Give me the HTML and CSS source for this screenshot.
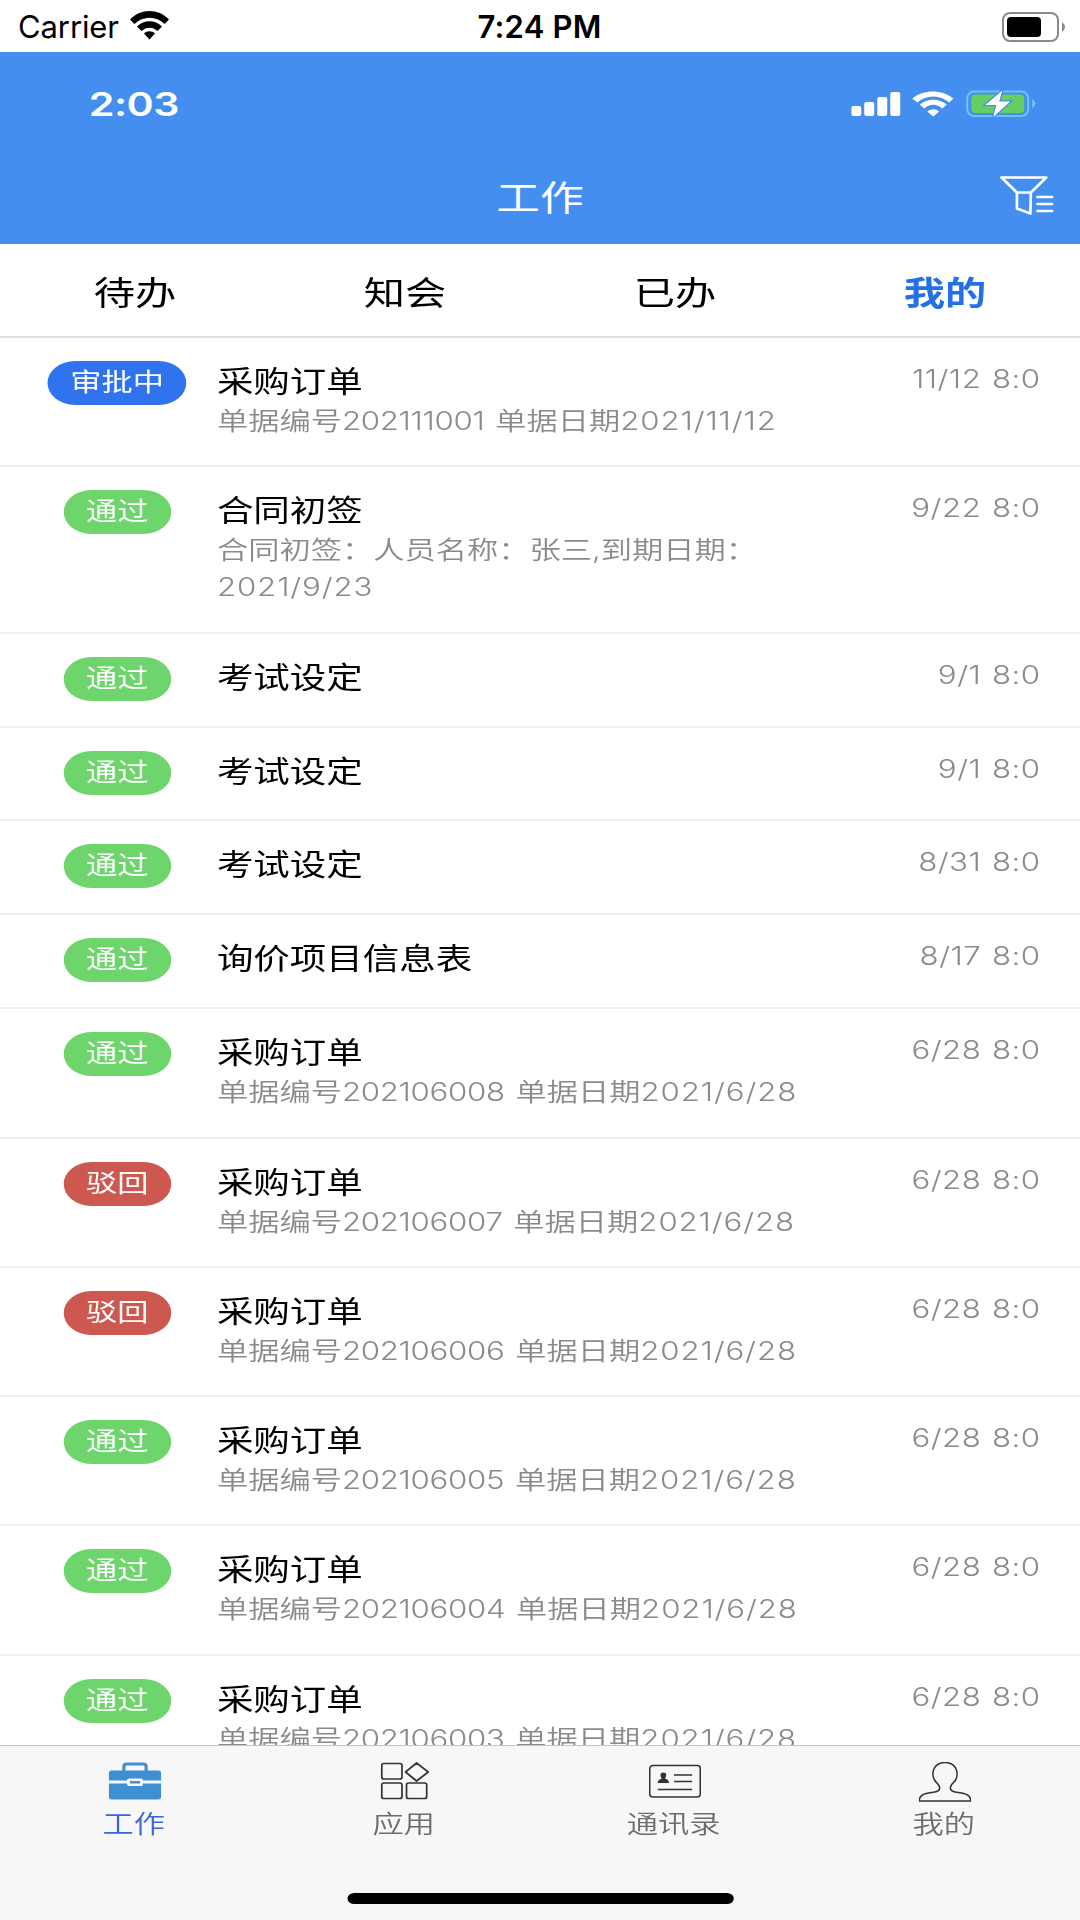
FILE: index.html
```html
<!DOCTYPE html>
<html lang="zh-CN">
<head>
    <meta charset="utf-8">
    <title>工作</title>
    <link rel="stylesheet" href="styles.css">
</head>
<body>
    <div class="statusbar">
        <div class="carrier">
            <span>Carrier</span>
            <svg width="39" height="29" viewBox="0 0 39 29">
                <path d="M0 8.500C11-2.800 28-2.800 39 8.500L34.500 13C26 4.500 13 4.500 4.500 13ZM7 15.500C14 8.500 25 8.500 32 15.500L27.500 20C23 15.500 16 15.500 11.500 20ZM14 22.500C17 19.500 22 19.500 25 22.500L19.500 28.500Z"/>
            </svg>
        </div>
        <div class="clock">7:24 PM</div>
        <svg class="battery" width="64" height="30" viewBox="0 0 64 30">
            <rect x="1" y="1" width="55" height="28" rx="7" fill="none" stroke="#8a8a8a" stroke-width="2"/>
            <rect x="5" y="5" width="34" height="20" rx="4"/>
            <path d="M60 10Q66 15 60 20Z" fill="#8a8a8a"/>
        </svg>
    </div>

    <div class="app">
        <div class="header">
            <div class="phone">
                <span class="time">2:03</span>
                <svg width="148" height="28" viewBox="0 0 185 28" preserveAspectRatio="none">
                    <g fill="#fff">
                        <rect x="0" y="16" width="10" height="10" rx="2"/>
                        <rect x="13" y="12" width="10" height="14" rx="2"/>
                        <rect x="26" y="7" width="10" height="19" rx="2"/>
                        <rect x="39" y="2" width="10" height="24" rx="2"/>
                        <path d="M61 8.500C72-1 91-1 102 8.500L98 12.500C89 4.500 75 4.500 66 12.500ZM68.500 14.500C76 8 88 8 95.500 14.500L91 18.500C85 13.500 79 13.500 73 18.500ZM76 21.500C80 18.500 84 18.500 88 21.500L82 26.500Z"/>
                    </g>
                    <rect x="116" y="1.500" width="61" height="24.500" rx="7" fill="none" stroke="#79bdf8" stroke-width="2"/>
                    <rect x="120" y="4.500" width="53" height="18.500" rx="4" fill="#67ce62"/>
                    <path d="M181 9Q187 13.500 181 18Z" fill="#79c8f8"/>
                    <path d="M151 0.500L134 15H145L142 27L159 11.500H148Z" fill="#fff" stroke="#438eee" stroke-width="2.500" paint-order="stroke"/>
                </svg>
            </div>
            <div class="navbar">
                <h1>工作</h1>
                <svg class="filter" width="43" height="39" viewBox="0 0 54 39" preserveAspectRatio="none">
                    <path d="M1.500 1.500H46.500L31 16.500H17ZM17 16.500V32.500L30.500 37.500L31 16.500M36.500 21H53.500M36.500 28H53.500M36.500 35H53.500" fill="none" stroke="#fff" stroke-width="2.700" stroke-linejoin="round"/>
                </svg>
            </div>
        </div>

        <div class="tabs">
            <div class="tab">待办</div>
            <div class="tab">知会</div>
            <div class="tab">已办</div>
            <div class="tab active">我的</div>
        </div>

        <div class="list">
            <div class="item">
                <div class="state"><span class="tag doing">审批中</span></div>
                <div class="info"><h2>采购订单</h2><p>单据编号<span class="no">202111001</span> 单据日期<span class="day">2021/11/12</span></p></div>
                <div class="date">11/12 8:0</div>
            </div>
            <div class="item">
                <div class="state"><span class="tag pass">通过</span></div>
                <div class="info"><h2>合同初签</h2><p>合同初签：人员名称：张三,到期日期：<br><span class="day">2021/9/23</span></p></div>
                <div class="date">9/22 8:0</div>
            </div>
            <div class="item">
                <div class="state"><span class="tag pass">通过</span></div>
                <div class="info"><h2>考试设定</h2></div>
                <div class="date">9/1 8:0</div>
            </div>
            <div class="item">
                <div class="state"><span class="tag pass">通过</span></div>
                <div class="info"><h2>考试设定</h2></div>
                <div class="date">9/1 8:0</div>
            </div>
            <div class="item">
                <div class="state"><span class="tag pass">通过</span></div>
                <div class="info"><h2>考试设定</h2></div>
                <div class="date">8/31 8:0</div>
            </div>
            <div class="item">
                <div class="state"><span class="tag pass">通过</span></div>
                <div class="info"><h2>询价项目信息表</h2></div>
                <div class="date">8/17 8:0</div>
            </div>
            <div class="item">
                <div class="state"><span class="tag pass">通过</span></div>
                <div class="info"><h2>采购订单</h2><p>单据编号<span class="no">202106008</span> 单据日期<span class="day">2021/6/28</span></p></div>
                <div class="date">6/28 8:0</div>
            </div>
            <div class="item">
                <div class="state"><span class="tag reject">驳回</span></div>
                <div class="info"><h2>采购订单</h2><p>单据编号<span class="no">202106007</span> 单据日期<span class="day">2021/6/28</span></p></div>
                <div class="date">6/28 8:0</div>
            </div>
            <div class="item">
                <div class="state"><span class="tag reject">驳回</span></div>
                <div class="info"><h2>采购订单</h2><p>单据编号<span class="no">202106006</span> 单据日期<span class="day">2021/6/28</span></p></div>
                <div class="date">6/28 8:0</div>
            </div>
            <div class="item">
                <div class="state"><span class="tag pass">通过</span></div>
                <div class="info"><h2>采购订单</h2><p>单据编号<span class="no">202106005</span> 单据日期<span class="day">2021/6/28</span></p></div>
                <div class="date">6/28 8:0</div>
            </div>
            <div class="item">
                <div class="state"><span class="tag pass">通过</span></div>
                <div class="info"><h2>采购订单</h2><p>单据编号<span class="no">202106004</span> 单据日期<span class="day">2021/6/28</span></p></div>
                <div class="date">6/28 8:0</div>
            </div>
            <div class="item">
                <div class="state"><span class="tag pass">通过</span></div>
                <div class="info"><h2>采购订单</h2><p>单据编号<span class="no">202106003</span> 单据日期<span class="day">2021/6/28</span></p></div>
                <div class="date">6/28 8:0</div>
            </div>
        </div>

        <div class="menu">
            <div class="menu-item active">
                <svg width="42" height="40" viewBox="0 0 52 40" preserveAspectRatio="none">
                    <path d="M15 9V4.500Q15 2 18 2H34Q37 2 37 4.500V9" fill="none" stroke="#3f8fd3" stroke-width="3.200"/>
                    <path d="M3 8.500H49Q52 8.500 52 11.500V18.500H34Q34 16.500 32 16.500H20Q18 16.500 18 18.500H0V11.500Q0 8.500 3 8.500ZM0 21.500H18Q18 24 20 24H32Q34 24 34 21.500H52V34.500Q52 37.500 49 37.500H3Q0 37.500 0 34.500Z" fill="#3f8fd3"/>
                    <rect x="21" y="19" width="10" height="2.500" fill="#3f8fd3"/>
                </svg>
                <span>工作</span>
            </div>
            <div class="menu-item">
                <svg width="42" height="40" viewBox="0 0 52 40" preserveAspectRatio="none">
                    <g fill="none" stroke="#333" stroke-width="1.700" stroke-linejoin="round">
                        <rect x="3" y="1.500" width="20" height="15.500" rx="2"/>
                        <rect x="3" y="21" width="20" height="15.500" rx="2"/>
                        <rect x="27.500" y="21" width="20" height="15.500" rx="2"/>
                        <path d="M37.500 1L49 10L37.500 19L26.500 10Z"/>
                    </g>
                </svg>
                <span>应用</span>
            </div>
            <div class="menu-item">
                <svg width="42" height="40" viewBox="0 0 52 40" preserveAspectRatio="none">
                    <rect x="1" y="3.500" width="50" height="31.500" rx="3" fill="none" stroke="#333" stroke-width="1.500"/>
                    <path d="M25 13H43M25 19.500H43M9 27.500H43" stroke="#333" stroke-width="1.700"/>
                    <path d="M14.500 10.500C18 10.500 18 14 16 16.500C18 17.500 20 18 20 21H9C9 18 11 17.500 13 16.500C11 14 11 10.500 14.500 10.500Z" fill="#333"/>
                </svg>
                <span>通讯录</span>
            </div>
            <div class="menu-item">
                <svg width="42" height="40" viewBox="0 0 52 40" preserveAspectRatio="none">
                    <path d="M26 0.500C33 0.500 38 5 38 12C38 17 36 19 33 22C30 26 31 29 36 30C44 31.500 51.500 31.500 51.500 39H0.500C0.500 31.500 8 31.500 16 30C21 29 22 26 19 22C16 19 14 17 14 12C14 5 19 0.500 26 0.500Z" fill="none" stroke="#333" stroke-width="1.500"/>
                </svg>
                <span>我的</span>
            </div>
        </div>
        <div class="home"></div>
    </div>
</body>
</html>
```
FILE: styles.css
```css
* {
    box-sizing: border-box;
}
body {
    margin: 0;
    width: 1080px;
    height: 1920px;
    overflow: hidden;
    background-color: #fff;
    color: #000;
    font-family: Inter, "Noto Sans CJK SC", sans-serif;
}
h1, h2, p {
    margin: 0;
    font-weight: 400;
}
svg {
    display: block;
}
.statusbar {
    display: grid;
    grid-template-columns: 1fr auto 1fr;
    align-items: center;
    height: 52px;
    padding: 1px 14px 0 18px;
    font-size: 31px;
}
.carrier {
    display: flex;
    align-items: center;
    gap: 11px;
    letter-spacing: -0.1px;
}
.carrier svg {
    margin-top: -3px;
}
.clock {
    margin-right: 5px;
    font-weight: 600;
    letter-spacing: 0.2px;
}
.battery {
    justify-self: end;
}
/* 864px layout widened to the full 1080px */
.app {
    display: flex;
    flex-direction: column;
    width: 864px;
    height: 1868px;
    transform: scaleX(1.25);
    transform-origin: 0 0;
}
.header {
    height: 192px;
    background-color: #438eee;
    color: #fff;
}
.phone {
    display: flex;
    justify-content: space-between;
    align-items: center;
    height: 104px;
    padding: 0 35px 0 71px;
}
.time {
    font-size: 33px;
    font-weight: 600;
    letter-spacing: -0.4px;
}
.navbar {
    display: grid;
    grid-template-columns: 1fr auto 1fr;
    align-items: center;
    height: 84px;
    padding: 0 21px;
}
.navbar h1 {
    grid-column: 2;
    font-size: 35px;
    line-height: 50px;
}
.filter {
    justify-self: end;
    margin-top: -5px;
}
.tabs {
    display: flex;
    flex-shrink: 0;
    height: 94px;
    border-bottom: 2px solid #e0e0e0;
    font-size: 33px;
    line-height: 99px;
}
.tab {
    flex: 1;
    text-align: center;
}
.tab.active {
    color: #2470e6;
    font-weight: 700;
}
.list {
    flex: 1;
    overflow: hidden;
}
.item {
    display: flex;
    align-items: flex-start;
    padding: 23px 32px 25.300px 0;
    border-bottom: 2px solid #efefef;
    line-height: 37px;
}
.state {
    display: flex;
    justify-content: center;
    width: 173.500px;
}
.tag {
    height: 44px;
    margin: 0 0 -0.400px 14px;
    padding: 0 18px;
    border-radius: 22px;
    color: #fff;
    font-size: 25px;
    line-height: 43px;
}
.doing {
    background-color: #2f74ee;
}
.pass {
    background-color: #6dd56c;
}
.reject {
    background-color: #cd5850;
}
.info {
    flex: 1;
}
.info h2 {
    font-size: 29.200px;
    line-height: 42px;
}
.info p {
    color: #8a8a8a;
    font-size: 25px;
    font-weight: 350;
    word-spacing: 1.500px;
}
.no {
    letter-spacing: -0.250px;
}
.day {
    letter-spacing: 0.700px;
}
.date {
    margin-right: -0.500px;
    color: #8a8a8a;
    font-size: 25px;
    font-weight: 350;
    letter-spacing: 0.400px;
    word-spacing: 1px;
}
.menu {
    display: flex;
    flex-shrink: 0;
    height: 148px;
    padding-top: 16px;
    border-top: 1px solid #c4c4c4;
    background-color: #f7f7f7;
}
.menu-item {
    display: flex;
    flex: 1;
    flex-direction: column;
    align-items: center;
    gap: 4px;
    color: #6d6d6d;
    font-size: 25px;
    font-weight: 350;
    line-height: 37px;
}
.menu-item span {
    margin-left: -2px;
}
.menu-item.active {
    color: #3a66d8;
}
.home {
    flex-shrink: 0;
    height: 27px;
    background-color: #f7f7f7;
}
.home::before {
    content: "";
    display: block;
    width: 309px;
    height: 11px;
    margin: 0 auto;
    border-radius: 6px;
    background-color: #000;
}
```
